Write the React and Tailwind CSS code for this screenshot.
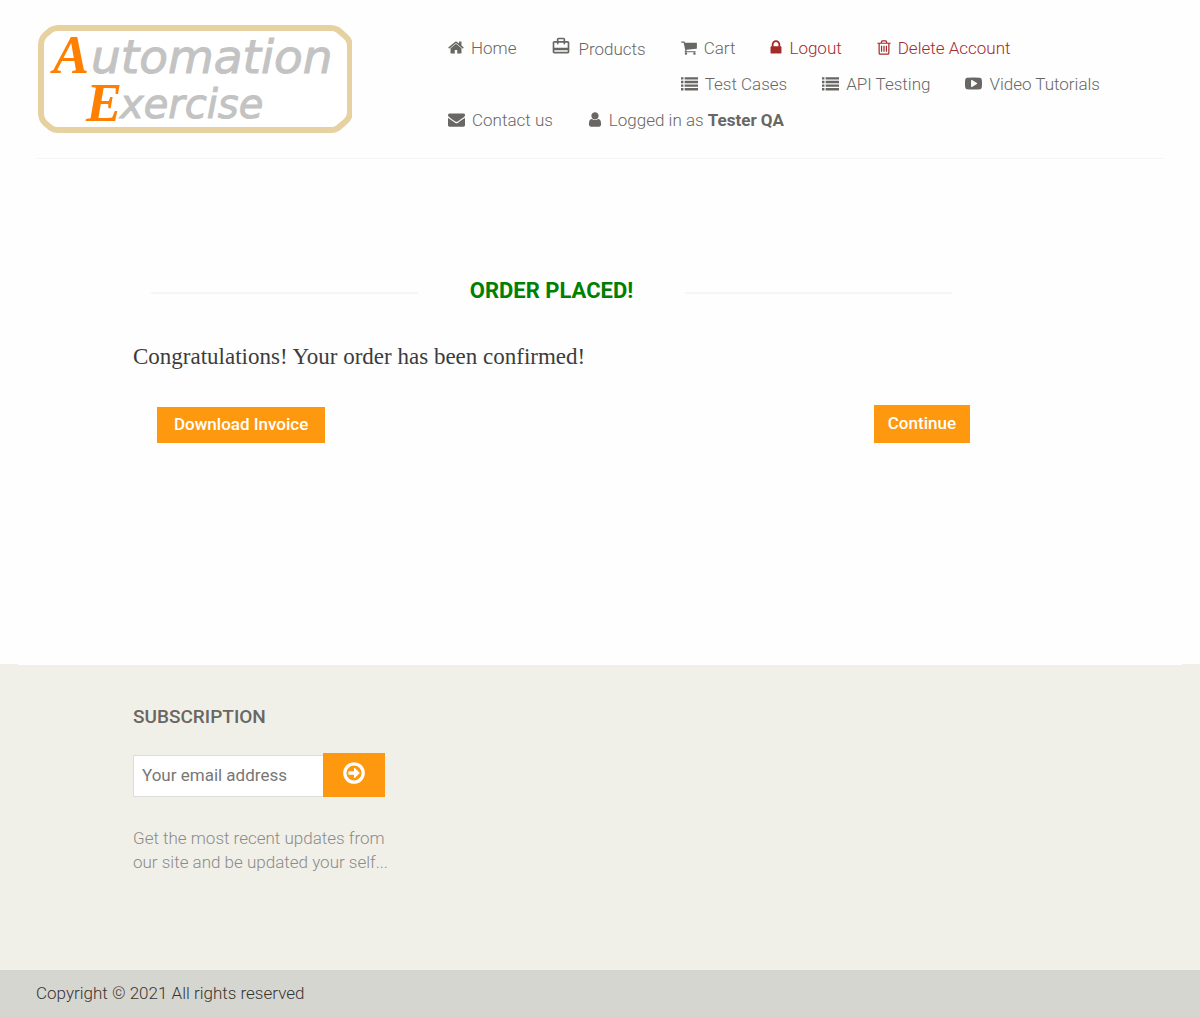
import { MdOutlineCardTravel } from "react-icons/md";

const ICONS = {
  home: "M1472 992v480q0 26-19 45t-45 19h-384v-384h-256v384h-384q-26 0-45-19t-19-45v-480q0-1 .5-3t.5-3l575-474 575 474q1 2 1 6zm223-69l-62 74q-8 9-21 11h-3q-13 0-21-7l-692-577-692 577q-12 8-24 7-13-2-21-11l-62-74q-8-10-7-23.5t11-21.5l719-599q32-26 76-26t76 26l244 204v-195q0-14 9-23t23-9h192q14 0 23 9t9 23v408l219 182q10 8 11 21.5t-7 23.5z",
  cart: "M704 1536q0 52-38 90t-90 38-90-38-38-90 38-90 90-38 90 38 38 90zm896 0q0 52-38 90t-90 38-90-38-38-90 38-90 90-38 90 38 38 90zm128-1088v512q0 24-16.5 42.5t-40.5 21.5l-1044 122q13 60 13 70 0 16-24 64h920q26 0 45 19t19 45-19 45-45 19h-1024q-26 0-45-19t-19-45q0-11 8-31.5t16-36 21.5-40 15.5-29.5l-177-823h-204q-26 0-45-19t-19-45 19-45 45-19h256q16 0 28.5 6.5t19.5 15.5 13 24.5 8 26 5.5 29.5 4.5 26h1201q26 0 45 19t19 45z",
  lock: "M640 768h512v-192q0-106-75-181t-181-75-181 75-75 181v192zm832 96v576q0 40-28 68t-68 28h-960q-40 0-68-28t-28-68v-576q0-40 28-68t68-28h32v-192q0-184 132-316t316-132 316 132 132 316v192h32q40 0 68 28t28 68z",
  trash: "M704 736v576q0 14-9 23t-23 9h-64q-14 0-23-9t-9-23v-576q0-14 9-23t23-9h64q14 0 23 9t9 23zm256 0v576q0 14-9 23t-23 9h-64q-14 0-23-9t-9-23v-576q0-14 9-23t23-9h64q14 0 23 9t9 23zm256 0v576q0 14-9 23t-23 9h-64q-14 0-23-9t-9-23v-576q0-14 9-23t23-9h64q14 0 23 9t9 23zm128 724v-948h-896v948q0 22 7 40.5t14.5 27 10.5 8.5h832q3 0 10.5-8.5t14.5-27 7-40.5zm-672-1076h448l-48-117q-7-9-17-11h-317q-10 2-17 11zm928 32v64q0 14-9 23t-23 9h-96v948q0 83-47 143.5t-113 60.5h-832q-66 0-113-58.5t-47-141.5v-952h-96q-14 0-23-9t-9-23v-64q0-14 9-23t23-9h309l70-167q15-37 54-63t79-26h320q40 0 79 26t54 63l70 167h309q14 0 23 9t9 23z",
  list: "M0 224h256v256h-256zM0 608h256v256h-256zM0 992h256v256h-256zM0 1376h256v256h-256zM384 224h1408v256h-1408zM384 608h1408v256h-1408zM384 992h1408v256h-1408zM384 1376h1408v256h-1408z",
  video: "M1280 896q0-37-30-54l-512-320q-31-20-65-2-33 18-33 56v640q0 38 33 56 16 8 31 8 20 0 34-10l512-320q30-17 30-54zm512 0q0 96-1 150t-8.5 136.5-22.5 147.5q-16 73-69 123t-124 58q-222 25-671 25t-671-25q-71-8-124.5-58t-69.5-123q-14-65-21.5-147.5t-8.5-136.5-1-150 1-150 8.5-136.5 22.5-147.5q16-73 69-123t124-58q222-25 671-25t671 25q71 8 124.5 58t69.5 123q14 65 21.5 147.5t8.5 136.5 1 150z",
  mail: "M1792 710v794q0 66-47 113t-113 47h-1472q-66 0-113-47t-47-113v-794q44 49 101 87 362 246 497 345 57 42 92.5 65.5t94.5 48 110 24.5h2q51 0 110-24.5t94.5-48 92.5-65.5q170-123 498-345 57-39 100-87zm0-294q0 79-49 151t-122 123q-376 261-468 325-10 7-42.5 31t-54 38.5-52 32.5-57.5 27-50 9h-2q-23 0-50-9t-57.5-27-52-32.5-54-38.5-42.5-31q-91-64-262-182.5t-205-142.5q-62-42-117-115.5t-55-136.5q0-78 41.5-130t118.5-52h1472q65 0 112.5 47t47.5 113z",
  user: "M1536 1399q0 109-62.5 187t-150.5 78h-854q-88 0-150.5-78t-62.5-187q0-85 8.5-160.5t31.5-152 58.5-131 94-89 134.5-34.5q131 128 313 128t313-128q76 0 134.5 34.5t94 89 58.5 131 31.5 152 8.5 160.5zm-256-887q0 159-112.5 271.5t-271.5 112.5-271.5-112.5-112.5-271.5 112.5-271.5 271.5-112.5 271.5 112.5 112.5 271.5z",
};

/* Icons share a 1792-unit grid; the view box trims the empty sides of each. */
function Icon({ name, box = "0 0 1792 1792", className }) {
  return (
    <svg viewBox={box} className={className} fill="currentColor" aria-hidden="true">
      <path d={ICONS[name]} />
    </svg>
  );
}

function NavItem({ icon, box, iconClass, tone = "text-[#696763]", children }) {
  return (
    <li className="float-left h-9 pr-[35px]">
      <a href="#" className={`flex h-6 items-center gap-[7px] whitespace-nowrap ${tone}`}>
        <span className="mb-0.5 shrink-0">
          <Icon name={icon} box={box} className={iconClass} />
        </span>
        <span>{children}</span>
      </a>
    </li>
  );
}

function Logo() {
  return (
    <svg viewBox="0 0 316 110" className="h-[110px] w-[316px]" role="img" aria-label="Automation Exercise">
      <path
        d="M22 4H295Q299 4 302 6L309 12Q314 16 314 22V88Q314 94 309 98L302 104Q299 106 295 106H22Q18 106 15 104L9 99Q5 95 5 89V21Q5 15 9 11L15 6Q18 4 22 4Z"
        fill="#fff"
        stroke="#e7d1a1"
        strokeWidth="6"
      />
      <g fontStyle="italic">
        <g fill="#ff8000" fontFamily='"Liberation Serif", serif' fontWeight="700">
          <text x="17" y="49" fontSize="54">A</text>
          <text x="50" y="97" fontSize="54">E</text>
        </g>
        <g fill="#c3c3c3" stroke="#c3c3c3" strokeWidth="1" fontFamily='"DejaVu Sans", sans-serif'>
          <text x="55" y="49" fontSize="47">utomation</text>
          <text x="84" y="94" fontSize="40">xercise</text>
        </g>
      </g>
    </svg>
  );
}

export default function App() {
  return (
    <div className="flex min-h-screen flex-col bg-[#fefefe] font-['Roboto',sans-serif] text-[17px] leading-6 font-light text-[#696763]">
      <header className="px-9">
        <div className="flex items-start border-b border-[#f5f5f5] pb-3.5">
          <a href="#" className="mt-6 shrink-0">
            <Logo />
          </a>
          <nav className="mt-9 ml-24 grow">
            <ul className="flow-root">
              <NavItem icon="home" box="64 0 1664 1792" iconClass="h-[17px] w-4">Home</NavItem>
              <li className="float-left h-10 pr-[35px]">
                <a href="#" className="flex items-start gap-[7px]">
                  <MdOutlineCardTravel className="size-5" aria-hidden="true" />
                  <span className="pt-px">Products</span>
                </a>
              </li>
              <NavItem icon="cart" box="64 0 1664 1792" iconClass="h-[17px] w-4">Cart</NavItem>
              <NavItem icon="lock" box="320 0 1152 1792" iconClass="h-[17px] w-3" tone="text-[#a52a2a]">Logout</NavItem>
              <NavItem icon="trash" box="192 0 1408 1792" iconClass="h-[17px] w-3.5" tone="text-[#a52a2a]">Delete Account</NavItem>
              <NavItem icon="list" iconClass="size-[17px]">Test Cases</NavItem>
              <NavItem icon="list" iconClass="size-[17px]">API Testing</NavItem>
              <NavItem icon="video" iconClass="size-[17px]">Video Tutorials</NavItem>
              <NavItem icon="mail" iconClass="size-[17px]">Contact us</NavItem>
              <NavItem icon="user" box="256 0 1280 1792" iconClass="h-[17px] w-3.5">
                Logged in as <b className="font-bold">Tester QA</b>
              </NavItem>
            </ul>
          </nav>
        </div>
      </header>

      <main className="mr-[230px] ml-[133px] grow pt-[114px] pb-[220px]">
        <div className="grid grid-cols-3 items-center px-[18px]">
          <hr className="mt-1 border-t-2 border-[#f5f5f5]" />
          <h2 className="text-center text-[22px] leading-9 font-bold whitespace-nowrap text-[#008000]">ORDER PLACED!</h2>
          <hr className="mt-1 border-t-2 border-[#f5f5f5]" />
        </div>
        <p className="mt-8 font-['Liberation_Serif',serif] text-[23px] leading-8 font-normal text-[#3c3c3c]">
          Congratulations! Your order has been confirmed!
        </p>
        <div className="mt-8 flex items-end justify-between pl-6">
          <button type="button" className="h-9 bg-[#fe980f] px-[17px] pb-0.5 font-medium text-white">Download Invoice</button>
          <button type="button" className="h-[38px] bg-[#fe980f] px-3.5 pb-0.5 font-medium text-white">Continue</button>
        </div>
      </main>

      <footer className="bg-[#f0f0e9]">
        <div className="mx-[18px] h-px bg-[#fefefe]" />
        <div className="px-[133px] pt-10 pb-24">
          <div className="w-64">
            <h2 className="text-[19px] leading-6 font-medium">SUBSCRIPTION</h2>
            <form className="mt-6 mr-1 flex items-end">
              <input
                type="email"
                aria-label="Your email address"
                placeholder="Your email address"
                className="h-[42px] min-w-0 grow border border-r-0 border-[#dddddd] bg-white px-2 pb-0.5 font-normal outline-none placeholder:text-[#777]"
              />
              <button type="button" aria-label="Subscribe" className="flex h-11 w-[62px] shrink-0 justify-center bg-[#fe980f] pt-[9px] text-white">
                <svg viewBox="0 0 22 22" className="size-[22px]" aria-hidden="true">
                  <circle cx="11" cy="11" r="9.2" fill="none" stroke="currentColor" strokeWidth="3.2" />
                  <path d="M5.4 9.2h5.6V6.5q0-.9.8-.4l4.6 4.4q.5.5 0 1l-4.6 4.4q-.8.5-.8-.4v-2.7H5.4z" fill="currentColor" />
                </svg>
              </button>
            </form>
            <p className="mt-[29px] text-[#8c8b88]">Get the most recent updates from our site and be updated your self...</p>
          </div>
        </div>
        <div className="bg-[#d6d6d0] px-9 pt-[11px] pb-3 text-[#363432]">
          <p>Copyright © 2021 All rights reserved</p>
        </div>
      </footer>
    </div>
  );
}
